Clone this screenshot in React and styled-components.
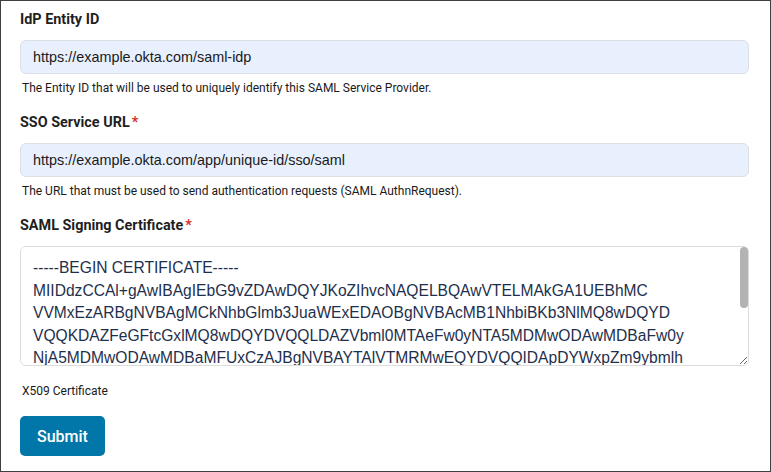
import React from "react";
import styled, { createGlobalStyle } from "styled-components";

const Global = createGlobalStyle`
  html, body { margin: 0; padding: 0; background: #fff; }
  * { box-sizing: border-box; }
`;

const Page = styled.form`
  width: 771px;
  height: 472px;
  border: 1px solid #404040;
  padding: 9px 21px 0 19px;
  display: flex;
  flex-direction: column;
  font-family: Roboto, "Liberation Sans", sans-serif;
  background: #fff;
`;

const Field = styled.div`
  display: flex;
  flex-direction: column;
  margin-top: ${(p) => (p.$first ? "0" : "17px")};
`;

const Label = styled.label`
  font-family: Roboto, "Liberation Sans", sans-serif;
  font-weight: 700;
  font-size: 14.4px;
  line-height: 20px;
  color: #1f1f1f;
  margin-bottom: 10px;
`;

const Required = styled.span`
  color: #d93025;
  margin-left: 2px;
`;

const Input = styled.input`
  display: block;
  width: 100%;
  height: 34px;
  border: 1px solid #dcdfe4;
  border-radius: 6px;
  background: #e8f0fe;
  padding: 0 12px;
  font-family: "Liberation Sans", Arial, sans-serif;
  font-size: 14.4px;
  color: #1a1a1a;
  outline: none;
`;

const AreaWrap = styled.div`
  position: relative;
`;

const TextArea = styled.textarea`
  display: block;
  width: 100%;
  height: 120px;
  border: 1px solid #dcdcdc;
  border-radius: 6px;
  background: #fff;
  padding: 10px 20px 10px 12px;
  font-family: "Liberation Sans", Arial, sans-serif;
  font-size: 15.6px;
  line-height: 22.5px;
  color: #1e2f4d;
  white-space: pre;
  overflow-y: scroll;
  overflow-x: hidden;
  outline: none;
  resize: vertical;
  scrollbar-width: none;
  &::-webkit-scrollbar { display: none; }
`;

const ScrollThumb = styled.div`
  position: absolute;
  top: 1px;
  right: 1px;
  width: 8px;
  height: 61px;
  border-radius: 4px;
  background: #b3b3b3;
  pointer-events: none;
`;

const Help = styled.div`
  margin-top: ${(p) => p.$gap || 6}px;
  padding-left: 2px;
  font-family: Roboto, "Liberation Sans", sans-serif;
  font-size: 12px;
  line-height: 16px;
  color: #1a1a1a;
`;

const SubmitButton = styled.button`
  align-self: flex-start;
  margin-top: 17px;
  height: 40px;
  padding: 0 17px;
  border: none;
  border-radius: 5px;
  background: #0077a8;
  color: #fff;
  font-family: Roboto, "Liberation Sans", sans-serif;
  font-weight: 500;
  font-size: 16px;
  cursor: pointer;
`;

const cert = `-----BEGIN CERTIFICATE-----
MIIDdzCCAl+gAwIBAgIEbG9vZDAwDQYJKoZIhvcNAQELBQAwVTELMAkGA1UEBhMC
VVMxEzARBgNVBAgMCkNhbGlmb3JuaWExEDAOBgNVBAcMB1NhbiBKb3NlMQ8wDQYD
VQQKDAZFeGFtcGxlMQ8wDQYDVQQLDAZVbml0MTAeFw0yNTA5MDMwODAwMDBaFw0y
NjA5MDMwODAwMDBaMFUxCzAJBgNVBAYTAlVTMRMwEQYDVQQIDApDYWxpZm9ybmlh
MRAwDgYDVQQHDAdTYW4gSm9zZTEPMA0GA1UECgwGRXhhbXBsZTEPMA0GA1UECwwG
VW5pdDEwggEiMA0GCSqGSIb3DQEBAQUAA4IBDwAwggEKAoIBAQC7vbqajDw4o6gJ
y8UtmIbkcpnkO3Kwc4qsEnSZp/TR+fQi62F79e8wO2nFm3dJl5Xk7PQ2YcRZ8hBv
-----END CERTIFICATE-----`;

export default function App() {
  return (
    <>
      <Global />
      <Page onSubmit={(e) => e.preventDefault()}>
        <Field $first>
          <Label>IdP Entity ID</Label>
          <Input defaultValue="https://example.okta.com/saml-idp" />
          <Help>The Entity ID that will be used to uniquely identify this SAML Service Provider.</Help>
        </Field>
        <Field>
          <Label>
            SSO Service URL<Required>*</Required>
          </Label>
          <Input defaultValue="https://example.okta.com/app/unique-id/sso/saml" />
          <Help>The URL that must be used to send authentication requests (SAML AuthnRequest).</Help>
        </Field>
        <Field>
          <Label>
            SAML Signing Certificate<Required>*</Required>
          </Label>
          <AreaWrap>
            <TextArea defaultValue={cert} spellCheck={false} />
            <ScrollThumb />
          </AreaWrap>
          <Help $gap={17}>X509 Certificate</Help>
        </Field>
        <SubmitButton type="submit">Submit</SubmitButton>
      </Page>
    </>
  );
}
